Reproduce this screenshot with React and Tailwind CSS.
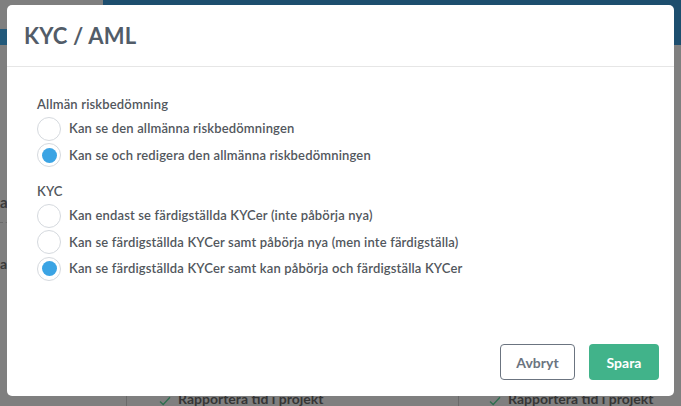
import { useState } from "react";

const font = { fontFamily: "Lato, 'Open Sans', sans-serif" };

const groups = [
  {
    title: "Allmän riskbedömning",
    options: [
      "Kan se den allmänna riskbedömningen",
      "Kan se och redigera den allmänna riskbedömningen",
    ],
    initial: 1,
  },
  {
    title: "KYC",
    options: [
      "Kan endast se färdigställda KYCer (inte påbörja nya)",
      "Kan se färdigställda KYCer samt påbörja nya (men inte färdigställa)",
      "Kan se färdigställda KYCer samt kan påbörja och färdigställa KYCer",
    ],
    initial: 2,
  },
];

const Radio = ({ checked, label, onClick }) => (
  <button
    onClick={onClick}
    className="flex items-center gap-[8px] h-[26.5px] text-left cursor-pointer"
  >
    <span className="w-[24px] h-[24px] rounded-full border border-[#d5d9de] bg-white flex items-center justify-center shrink-0">
      {checked && <span className="w-[15px] h-[15px] rounded-full bg-[#3ba4e4]" />}
    </span>
    <span className="text-[13px] font-semibold tracking-[0.16px] text-[#52575d]">
      {label}
    </span>
  </button>
);

const Check = () => (
  <svg width="12" height="10" viewBox="0 0 12 10" fill="none">
    <path d="M1 5.5 L4.2 8.5 L11 1.2" stroke="#2f6f4f" strokeWidth="1.4" />
  </svg>
);

const App = () => {
  const [sel, setSel] = useState(groups.map((g) => g.initial));

  return (
    <div
      className="relative w-[681px] h-[406px] overflow-hidden bg-[#7f7f7f] flex flex-col"
      style={font}
    >
      {/* PAGE BEHIND OVERLAY */}
      <div className="flex h-[45px] shrink-0">
        <div className="w-[103px] flex flex-col">
          <div className="h-[29px]" />
          <div className="flex-1 bg-[#22597a]" />
        </div>
        <div className="flex-1 bg-[#1d4e6e]" />
      </div>
      <div className="flex-1 flex flex-col">
        <div className="h-[150px]" />
        <p className="text-[15px] font-bold text-[#3a3a3a] leading-none">a</p>
        <div className="mt-[12px] border-t border-dashed border-[#6a6a6a] w-[20px]" />
        <p className="mt-[34px] text-[14px] font-bold text-[#3a3a3a] leading-none">ar</p>
      </div>
      <div className="flex h-[26px] shrink-0 items-end">
        <div className="w-[126px] h-full" />
        <div className="w-[332px] h-full border-l border-[#6a6a6a] flex items-end gap-[7px] pl-[32px]">
          <Check />
          <span className="text-[14px] font-bold text-[#353535] leading-[14px]">
            Rapportera tid i projekt
          </span>
        </div>
        <div className="flex-1 h-full border-l border-[#6a6a6a] flex items-end gap-[7px] pl-[30px]">
          <Check />
          <span className="text-[14px] font-bold text-[#353535] leading-[14px]">
            Rapportera tid i projekt
          </span>
        </div>
      </div>

      {/* MODAL */}
      <div className="absolute left-[7px] top-[5px] w-[667px] h-[391px] bg-white rounded-[5px] flex flex-col">
        <div className="h-[62px] shrink-0 border-b border-[#e6e6e6] flex items-center px-[17px]">
          <h2 className="text-[22px] font-bold text-[#525c68] tracking-[0.2px]">
            KYC / AML
          </h2>
        </div>

        <div className="flex-1 pl-[30px] pt-[28px]">
          {groups.map((g, gi) => (
            <div key={g.title} className={gi > 0 ? "mt-[13.5px]" : ""}>
              <p className="text-[13px] font-semibold tracking-[0.16px] text-[#52575d] leading-[18px] mb-[2.5px]">
                {g.title}
              </p>
              <div className="flex flex-col">
                {g.options.map((o, oi) => (
                  <Radio
                    key={o}
                    label={o}
                    checked={sel[gi] === oi}
                    onClick={() =>
                      setSel((s) => s.map((v, i) => (i === gi ? oi : v)))
                    }
                  />
                ))}
              </div>
            </div>
          ))}
        </div>

        <div className="flex justify-end gap-[14px] pr-[15px] pb-[16px]">
          <button className="w-[75px] h-[36px] rounded-[4px] border border-[#6b7480] text-[14px] font-bold text-[#6b7480] bg-white">
            Avbryt
          </button>
          <button className="w-[70px] h-[36px] rounded-[4px] bg-[#41b38a] text-[14px] font-bold text-white">
            Spara
          </button>
        </div>
      </div>
    </div>
  );
};

export default App;
